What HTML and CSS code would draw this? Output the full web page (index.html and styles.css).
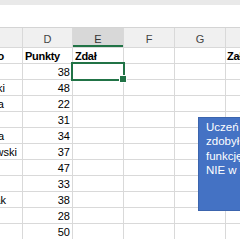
FILE: index.html
```html
<!DOCTYPE html>
<html lang="pl">
<head>
<meta charset="utf-8">
<title>Arkusz</title>
<link rel="stylesheet" href="styles.css">
</head>
<body>
<div class="app">
  <div class="ribbon"></div>
  <div class="formula"></div>
  <div class="sheet">
    <div class="hd"></div>
    <div class="hd">D</div>
    <div class="hd hd-active">E</div>
    <div class="hd">F</div>
    <div class="hd">G</div>
    <div class="hd"></div>

    <div class="c tail"><span class="b">Nazwisko</span></div>
    <div class="c b">Punkty</div>
    <div class="c b">Zdał</div>
    <div class="c"></div>
    <div class="c"></div>
    <div class="c b h">Zał</div>

    <div class="c tail"><span class="pad-far">Nowak</span></div>
    <div class="c n">38</div>
    <div class="c sel"></div>
    <div class="c"></div>
    <div class="c"></div>
    <div class="c"></div>

    <div class="c tail"><span class="pad-5">Kowalski</span></div>
    <div class="c n">48</div>
    <div class="c"></div>
    <div class="c"></div>
    <div class="c"></div>
    <div class="c"></div>

    <div class="c tail"><span class="pad-4">Wiśniewska</span></div>
    <div class="c n">22</div>
    <div class="c"></div>
    <div class="c"></div>
    <div class="c"></div>
    <div class="c"></div>

    <div class="c tail"><span class="pad-far">Wójcik</span></div>
    <div class="c n">31</div>
    <div class="c"></div>
    <div class="c"></div>
    <div class="c"></div>
    <div class="c"></div>

    <div class="c tail"><span class="pad-4">Kamińska</span></div>
    <div class="c n">34</div>
    <div class="c"></div>
    <div class="c"></div>
    <div class="c"></div>
    <div class="c"></div>

    <div class="c tail"><span class="pad-17">Lewandowski</span></div>
    <div class="c n">37</div>
    <div class="c"></div>
    <div class="c"></div>
    <div class="c"></div>
    <div class="c"></div>

    <div class="c tail"><span class="pad-far">Zieliński</span></div>
    <div class="c n">47</div>
    <div class="c"></div>
    <div class="c"></div>
    <div class="c"></div>
    <div class="c"></div>

    <div class="c tail"><span class="pad-far">Szymański</span></div>
    <div class="c n">33</div>
    <div class="c"></div>
    <div class="c"></div>
    <div class="c"></div>
    <div class="c"></div>

    <div class="c tail"><span class="pad-6">Woźniak</span></div>
    <div class="c n">38</div>
    <div class="c"></div>
    <div class="c"></div>
    <div class="c"></div>
    <div class="c"></div>

    <div class="c tail"><span class="pad-far">Dąbrowski</span></div>
    <div class="c n">28</div>
    <div class="c"></div>
    <div class="c"></div>
    <div class="c"></div>
    <div class="c"></div>

    <div class="c tail"><span class="pad-far">Kozłowski</span></div>
    <div class="c n">50</div>
    <div class="c"></div>
    <div class="c"></div>
    <div class="c"></div>
    <div class="c"></div>
  </div>

  <div class="note">
    <div class="note-line">Uczeń otrzymał zaliczenie, jeśli</div>
    <div class="note-line">zdobył co najmniej 30 punktów.</div>
    <div class="note-line">funkcję JEŻELI, wpisując TAK lub</div>
    <div class="note-line">NIE w zależności od wyniku.</div>
  </div>
</div>
</body>
</html>
```

FILE: styles.css
```css
* { box-sizing: border-box; }

html, body {
  margin: 0;
  padding: 0;
  background: #ffffff;
}

body {
  font-family: "Liberation Sans", Arial, sans-serif;
  font-size: 11px;
  color: #000;
  width: 240px;
  height: 240px;
  overflow: hidden;
}

.app {
  position: relative;
  width: 240px;
  height: 240px;
  overflow: hidden;
}

.ribbon {
  height: 5px;
  background: #e9e9e9;
}

.formula {
  height: 23px;
  background: #ffffff;
  border-bottom: 1px solid #d4d4d4;
}

.sheet {
  display: grid;
  grid-template-columns: 22px 49px 50px 50px 50px 1fr;
  grid-template-rows: 19px repeat(12, 15px);
  column-gap: 1px;
  row-gap: 1px;
  background: #d9d9d9;
  width: 260px;
}

.hd {
  background: #f0f0f0;
  color: #444;
  display: flex;
  align-items: flex-end;
  justify-content: center;
  line-height: 13px;
  padding-bottom: 1px;
}

.hd-active {
  background: #d8d8d8;
  color: #333;
  box-shadow: inset 0 -2px 0 #217346;
}

.c {
  background: #ffffff;
  display: flex;
  align-items: flex-end;
  line-height: 13px;
  padding: 0 2px;
  white-space: nowrap;
  overflow: hidden;
  position: relative;
}

.c.h { padding-left: 1px; }

.b { font-weight: bold; letter-spacing: -0.3px; }

.n { justify-content: flex-end; }

.tail {
  justify-content: flex-end;
  padding: 0;
}

.tail span { flex-shrink: 0; }
.pad-4 { padding-right: 18px; }
.pad-5 { padding-right: 17px; }
.pad-6 { padding-right: 16px; }
.pad-17 { padding-right: 5px; }
.pad-far { padding-right: 40px; }
.tail .b { padding-right: 18px; }

.sel {
  overflow: visible;
  outline: 2px solid #217346;
  outline-offset: 0px;
  z-index: 2;
}

.sel::after {
  content: "";
  position: absolute;
  right: -4px;
  bottom: -4px;
  width: 6px;
  height: 6px;
  background: #217346;
  border: 1px solid #ffffff;
}

.note {
  position: absolute;
  left: 198px;
  top: 117px;
  width: 160px;
  height: 94px;
  background: #4472c4;
  border: 1px solid #3b64ad;
  color: #ffffff;
  font-size: 11.5px;
  line-height: 14.3px;
  padding: 2px 0 0 7px;
  z-index: 3;
}

.note-line { white-space: nowrap; }
```
